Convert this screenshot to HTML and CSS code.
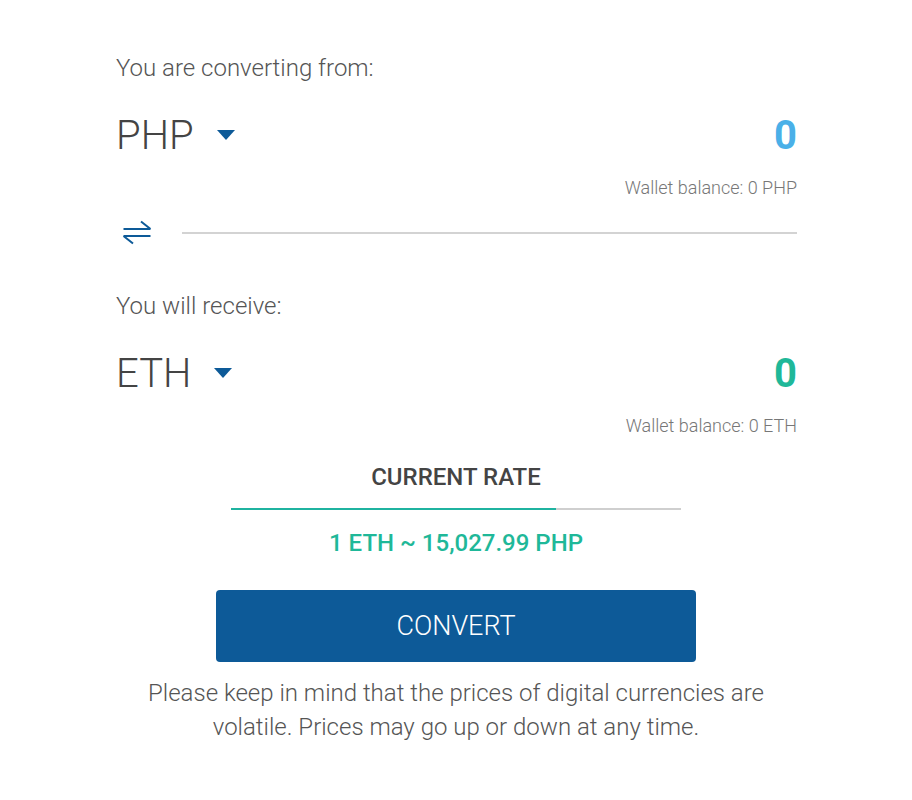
FILE: index.html
```html
<!DOCTYPE html>
<html>
<head>
<meta charset="utf-8">
<link rel="stylesheet" href="styles.css">
</head>
<body>
<div class="converter">
  <div class="label">You are converting from:</div>
  <div class="currency-row">
    <div class="currency">PHP <span class="caret"></span></div>
    <div class="amount amount-from">0</div>
  </div>
  <div class="balance">Wallet balance: 0 PHP</div>
  <div class="divider-row">
    <svg class="swap" width="30" height="26" viewBox="0 0 30 26">
      <path d="M1.5 9 H28.5 M19 1.5 L28.5 9" fill="none" stroke="#0d5a98" stroke-width="2"/>
      <path d="M28.5 16 H1.5 M11 23.5 L1.5 16" fill="none" stroke="#0d5a98" stroke-width="2"/>
    </svg>
    <div class="divider"></div>
  </div>
  <div class="label label-receive">You will receive:</div>
  <div class="currency-row">
    <div class="currency">ETH <span class="caret"></span></div>
    <div class="amount amount-to">0</div>
  </div>
  <div class="balance">Wallet balance: 0 ETH</div>
  <div class="rate">
    <div class="rate-title">CURRENT RATE</div>
    <div class="rate-bar"><div class="rate-fill"></div></div>
    <div class="rate-value">1 ETH ~ 15,027.99 PHP</div>
  </div>
  <button class="convert">CONVERT</button>
  <p class="note">Please keep in mind that the prices of digital currencies are volatile. Prices may go up or down at any time.</p>
</div>
</body>
</html>
```
FILE: styles.css
```css
html, body {
  margin: 0;
  padding: 0;
  background: #fff;
}
body {
  font-family: Roboto, "Liberation Sans", sans-serif;
  font-weight: 300;
  color: #555;
}
.converter {
  width: 682px;
  margin: 0 auto;
  padding-top: 53px;
}
.label {
  font-size: 24px;
  line-height: 30px;
  color: #555;
  padding-left: 1px;
}
.label-receive {
  margin-top: 43px;
}
.currency-row {
  display: flex;
  justify-content: space-between;
  align-items: center;
  margin-top: 28px;
  height: 50px;
}
.currency {
  font-size: 40px;
  line-height: 50px;
  color: #444;
  display: flex;
  align-items: center;
  padding-left: 1px;
}
.caret {
  display: inline-block;
  width: 0;
  height: 0;
  border-left: 9px solid transparent;
  border-right: 9px solid transparent;
  border-top: 10px solid #0d5a98;
  margin-left: 23px;
  margin-top: -2px;
}
.amount {
  font-size: 40px;
  font-weight: 700;
  line-height: 50px;
}
.amount-from { color: #4ab0e8; }
.amount-to { color: #1fb899; }
.balance {
  text-align: right;
  font-size: 18px;
  line-height: 22px;
  color: #777;
  margin-top: 16px;
}
.divider-row {
  display: flex;
  align-items: center;
  margin-top: 19px;
  height: 30px;
}
.swap {
  margin-left: 7px;
  flex: none;
}
.divider {
  flex: 1;
  height: 2px;
  background: #d3d3d3;
  margin-left: 30px;
}
.rate {
  width: 450px;
  margin: 25px auto 0;
  text-align: center;
}
.rate-title {
  font-size: 24px;
  font-weight: 500;
  color: #444;
  line-height: 30px;
}
.rate-bar {
  height: 2px;
  background: #cfcfcf;
  margin-top: 16px;
  display: flex;
}
.rate-fill {
  width: 325px;
  background: #1fb3a0;
}
.rate-value {
  font-size: 24px;
  font-weight: 500;
  color: #1fb899;
  line-height: 30px;
  margin-top: 18px;
}
.convert {
  display: block;
  width: 480px;
  height: 72px;
  margin: 32px auto 0;
  border: none;
  border-radius: 4px;
  background: #0d5a98;
  color: #fff;
  font-family: Roboto, "Liberation Sans", sans-serif;
  font-weight: 300;
  font-size: 27px;
}
.note {
  width: 660px;
  margin: 14px auto 0;
  text-align: center;
  font-size: 24px;
  line-height: 34px;
  color: #555;
}
```
